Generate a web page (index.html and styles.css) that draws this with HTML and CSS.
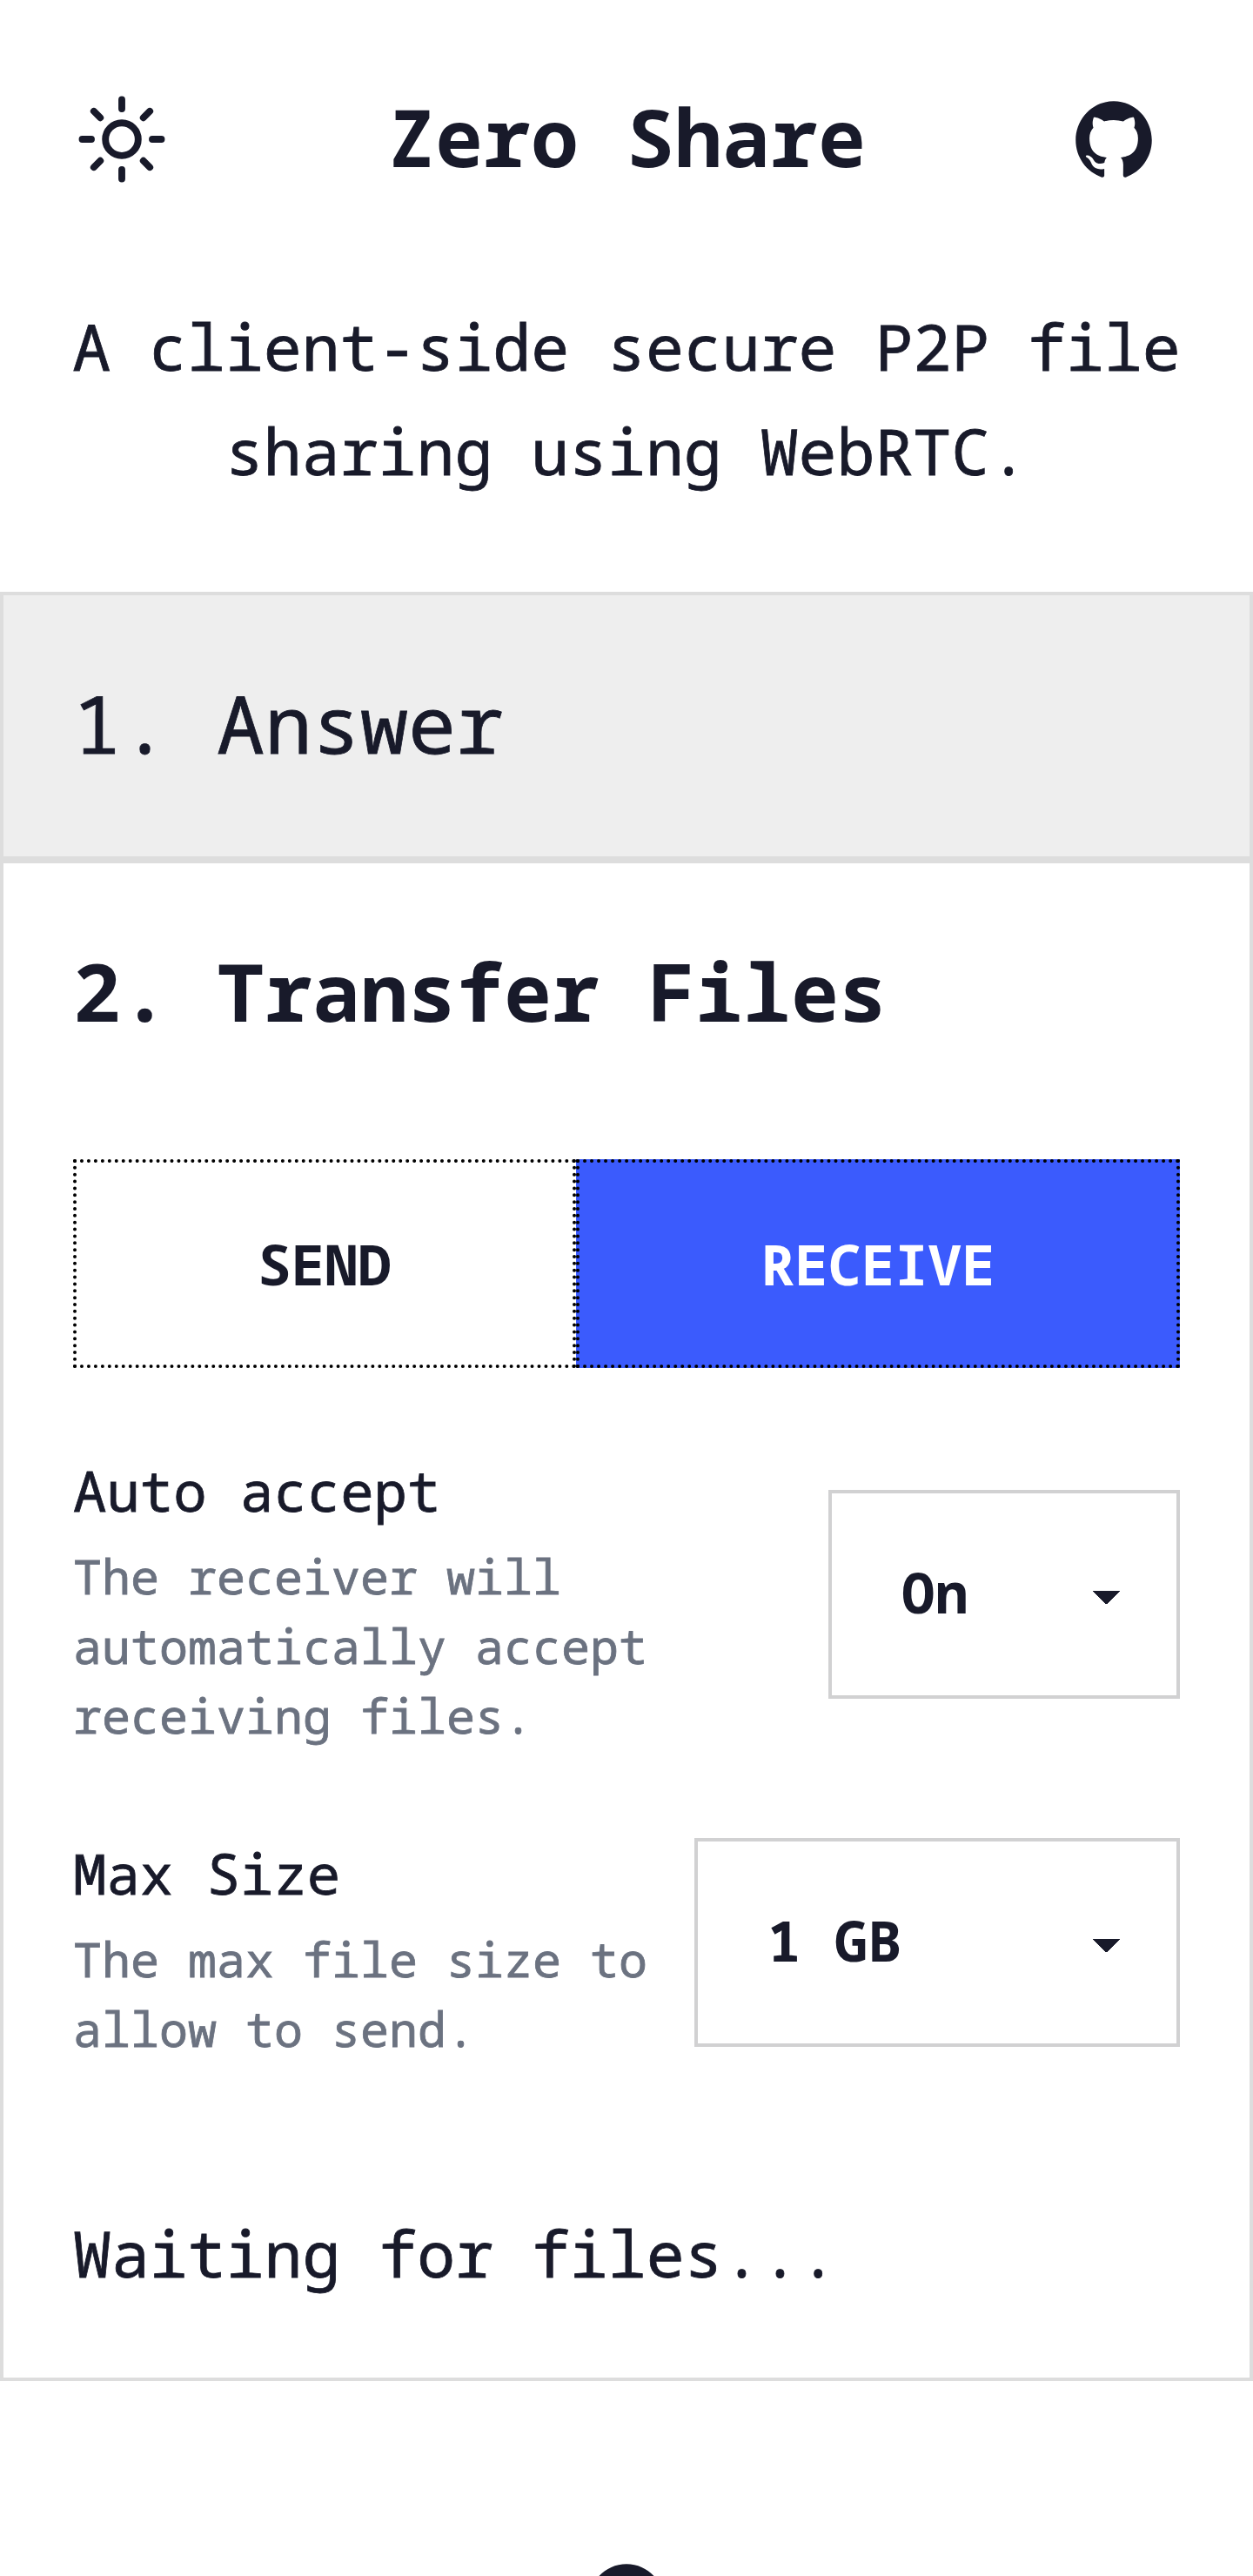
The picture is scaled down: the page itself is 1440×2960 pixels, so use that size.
FILE: index.html
```html
<!DOCTYPE html>
<html lang="en">
<head>
<meta charset="utf-8">
<title>Zero Share</title>
<link rel="stylesheet" href="styles.css">
</head>
<body>
<header class="header">
  <svg class="icon-sun" viewBox="0 0 512 512" fill="none" stroke="currentColor" stroke-width="36" stroke-linecap="round">
    <path d="M256 48v48M256 416v48M403.08 108.92l-33.94 33.94M142.86 369.14l-33.94 33.94M464 256h-48M96 256H48M403.08 403.08l-33.94-33.94M142.86 142.86l-33.94-33.94"/>
    <circle cx="256" cy="256" r="86"/>
  </svg>
  <h1 class="title">Zero Share</h1>
  <svg class="icon-github" viewBox="0 0 512 512" fill="currentColor"><path id="github" d="M256 32C132.3 32 32 134.9 32 261.7c0 101.5 64.2 187.5 153.2 217.9a17.56 17.56 0 003.8.4c8.3 0 11.5-6.1 11.5-11.4 0-5.5-.2-19.9-.3-39.1a102.4 102.4 0 01-22.6 2.7c-43.1 0-52.9-33.5-52.9-33.5-10.2-26.5-24.9-33.6-24.9-33.6-19.5-13.7-.1-14.1 1.4-14.1h.1c22.5 2 34.3 23.8 34.3 23.8 11.2 19.6 26.2 25.1 39.6 25.1a63 63 0 0025.6-6c2-14.8 7.8-24.9 14.2-30.7-49.7-5.8-102-25.5-102-113.5 0-25.1 8.7-45.6 23-61.6-2.3-5.8-10-29.2 2.2-60.8a18.64 18.64 0 015-.5c8.1 0 26.4 3.1 56.6 24.1a208.21 208.21 0 01112.2 0c30.2-21 48.5-24.1 56.6-24.1a18.64 18.64 0 015 .5c12.2 31.6 4.5 55 2.2 60.8 14.3 16.1 23 36.6 23 61.6 0 88.2-52.4 107.6-102.3 113.3 8 7.1 15.2 21.1 15.2 42.5 0 30.7-.3 55.5-.3 63 0 5.4 3.1 11.5 11.4 11.5a19.35 19.35 0 004-.4C415.9 449.2 480 363.1 480 261.7 480 134.9 379.7 32 256 32z"/></svg>
</header>
<p class="tagline">A client-side secure P2P file sharing using WebRTC.</p>
<main>
  <section class="step step-done"><h2 class="step-title">1. Answer</h2></section>
  <section class="step step-active">
    <h2 class="step-title">2. Transfer Files</h2>
    <div class="tabs">
      <button class="tab tab-send">SEND</button>
      <button class="tab tab-receive">RECEIVE</button>
    </div>
    <div class="setting">
      <div class="setting-text">
        <h3 class="label">Auto accept</h3>
        <p class="hint">The receiver will automatically accept receiving files.</p>
      </div>
      <div class="select select-accept">On</div>
    </div>
    <div class="setting">
      <div class="setting-text">
        <h3 class="label">Max Size</h3>
        <p class="hint">The max file size to allow to send.</p>
      </div>
      <div class="select select-size">1 GB</div>
    </div>
    <p class="status">Waiting for files...</p>
  </section>
</main>
<footer class="footer">
  <svg class="icon-github" viewBox="0 0 512 512" fill="currentColor"><use href="#github"/></svg>
</footer>
</body>
</html>
```
FILE: styles.css
```css
* { box-sizing: border-box; margin: 0; padding: 0; }
html { height: 2960px; overflow: hidden; }
body {
  height: 2960px;
  overflow: hidden;
  background: #fff;
  color: #181a2a;
  font-family: "Noto Sans Mono", "DejaVu Sans Mono", monospace;
  font-size: 64px;
  font-weight: 400;
  line-height: 96px;
  -webkit-text-stroke: 0.8px currentColor;
}
svg { display: block; flex: none; }
.header {
  display: flex;
  justify-content: space-between;
  align-items: center;
  height: 320px;
  padding: 0 110px 0 84px;
}
.icon-sun { width: 112px; height: 112px; }
.icon-github { width: 100px; height: 100px; }
.title,
.step-active .step-title,
.tab,
.select {
  font-weight: 700;
  -webkit-text-stroke: 0;
}
.title {
  padding: 0 0 6px 14px;
  font-size: 91.67px;
  line-height: 120px;
}
.tagline {
  height: 360px;
  padding: 18px 76px 0;
  text-align: center;
  font-size: 73.2px;
  line-height: 120px;
}
.step { border: 4px solid #ddd; padding: 0 80px; }
.step-done { height: 308px; background: #eee; }
.step-active { height: 1748px; }
.step-title { font-size: 91.67px; line-height: 294px; font-weight: 400; }
.tabs { display: flex; margin: 46px 0 81px; }
.tab {
  height: 240px;
  border: 4px dotted #000;
  background: none;
  color: inherit;
  font-family: inherit;
  font-size: inherit;
}
.tab-send { width: 578px; }
.tab-receive { width: 694px; background: #3b5bfd; color: #fff; }
.setting {
  display: flex;
  justify-content: space-between;
  align-items: center;
  margin-bottom: 82px;
}
.setting-text { width: 670px; margin-right: -40px; }
.label {
  margin-bottom: -2px;
  font-size: 64px;
  font-weight: 400;
  line-height: 120px;
}
.hint { font-size: 55px; line-height: 80px; color: #6b7280; }
.select {
  flex: none;
  height: 240px;
  padding-left: 80px;
  border: 4px solid #d1d1d2;
  line-height: 227px;
  background-image: linear-gradient(45deg, transparent 50%, currentColor 50%), linear-gradient(135deg, currentColor 50%, transparent 50%);
  background-position: calc(100% - 80px) calc(50% + 4px), calc(100% - 64px) calc(50% + 4px);
  background-size: 16px 16px;
  background-repeat: no-repeat;
}
.select-accept { width: 404px; }
.select-size { width: 558px; }
.status { margin-top: 158px; font-size: 73.2px; line-height: 120px; }
.footer { display: flex; justify-content: center; padding-top: 204px; }
```
